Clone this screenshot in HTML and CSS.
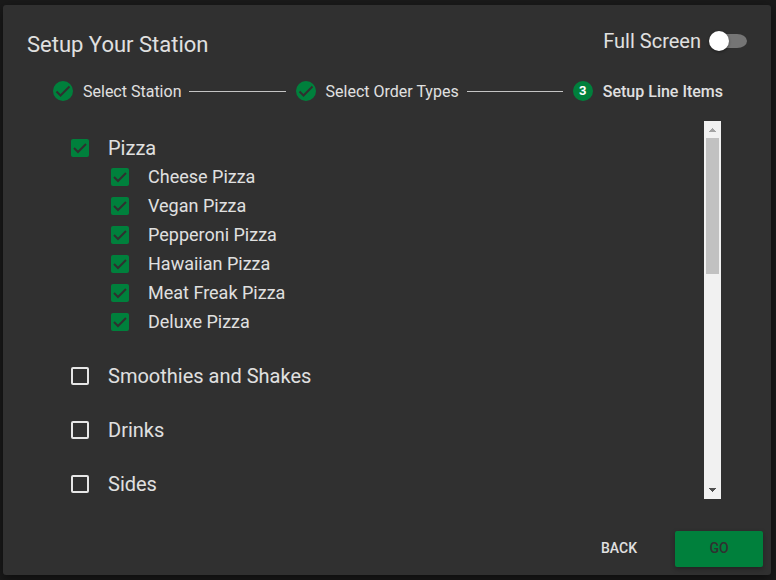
FILE: index.html
```html
<!DOCTYPE html>
<html lang="en">
<head>
<meta charset="utf-8">
<meta name="viewport" content="width=device-width, initial-scale=1">
<title>Setup Your Station</title>
<link rel="stylesheet" href="styles.css">
</head>
<body>
<main class="dialog">
  <header class="header">
    <h1 class="title">Setup Your Station</h1>
    <label class="toggle">
      <span>Full Screen</span>
      <input class="switch" type="checkbox" role="switch">
    </label>
  </header>

  <ol class="stepper">
    <li class="step">
      <span class="badge"><svg class="tick" viewBox="0 0 18 18" aria-hidden="true"><path d="M2.5 9.5 6.5 13.5 15.5 4.5"/></svg></span>
      <span class="name">Select Station</span>
    </li>
    <li class="line" role="presentation"></li>
    <li class="step">
      <span class="badge"><svg class="tick" viewBox="0 0 18 18" aria-hidden="true"><path d="M2.5 9.5 6.5 13.5 15.5 4.5"/></svg></span>
      <span class="name">Select Order Types</span>
    </li>
    <li class="line" role="presentation"></li>
    <li class="step current" aria-current="step">
      <span class="badge">3</span>
      <span class="name">Setup Line Items</span>
    </li>
  </ol>

  <div class="panel">
    <ul class="groups">
      <li class="group">
        <label class="row"><span class="check"><input class="box" type="checkbox" checked><svg class="mark" viewBox="0 0 18 18" aria-hidden="true"><path d="M3 9 7 13 15 5"/></svg></span><span>Pizza</span></label>
        <ul class="items">
          <li><label class="row item"><span class="check"><input class="box" type="checkbox" checked><svg class="mark" viewBox="0 0 18 18" aria-hidden="true"><path d="M3 9 7 13 15 5"/></svg></span><span>Cheese Pizza</span></label></li>
          <li><label class="row item"><span class="check"><input class="box" type="checkbox" checked><svg class="mark" viewBox="0 0 18 18" aria-hidden="true"><path d="M3 9 7 13 15 5"/></svg></span><span>Vegan Pizza</span></label></li>
          <li><label class="row item"><span class="check"><input class="box" type="checkbox" checked><svg class="mark" viewBox="0 0 18 18" aria-hidden="true"><path d="M3 9 7 13 15 5"/></svg></span><span>Pepperoni Pizza</span></label></li>
          <li><label class="row item"><span class="check"><input class="box" type="checkbox" checked><svg class="mark" viewBox="0 0 18 18" aria-hidden="true"><path d="M3 9 7 13 15 5"/></svg></span><span>Hawaiian Pizza</span></label></li>
          <li><label class="row item"><span class="check"><input class="box" type="checkbox" checked><svg class="mark" viewBox="0 0 18 18" aria-hidden="true"><path d="M3 9 7 13 15 5"/></svg></span><span>Meat Freak Pizza</span></label></li>
          <li><label class="row item"><span class="check"><input class="box" type="checkbox" checked><svg class="mark" viewBox="0 0 18 18" aria-hidden="true"><path d="M3 9 7 13 15 5"/></svg></span><span>Deluxe Pizza</span></label></li>
        </ul>
      </li>
      <li class="group">
        <label class="row"><span class="check"><input class="box" type="checkbox"><svg class="mark" viewBox="0 0 18 18" aria-hidden="true"><path d="M3 9 7 13 15 5"/></svg></span><span>Smoothies and Shakes</span></label>
      </li>
      <li class="group">
        <label class="row"><span class="check"><input class="box" type="checkbox"><svg class="mark" viewBox="0 0 18 18" aria-hidden="true"><path d="M3 9 7 13 15 5"/></svg></span><span>Drinks</span></label>
      </li>
      <li class="group">
        <label class="row"><span class="check"><input class="box" type="checkbox"><svg class="mark" viewBox="0 0 18 18" aria-hidden="true"><path d="M3 9 7 13 15 5"/></svg></span><span>Sides</span></label>
      </li>
    </ul>
    <div class="scrollbar" aria-hidden="true">
      <svg class="arrow up" viewBox="0 0 17 17" shape-rendering="crispEdges"><path d="M8 7h1v1h1v1h1v1h1v1H5v-1h1V9h1V8h1z"/></svg>
      <div class="track"><div class="thumb"></div></div>
      <svg class="arrow down" viewBox="0 0 17 17" shape-rendering="crispEdges"><path d="M5 6h7v1h-1v1h-1v1H9v1H8V9H7V8H6V7H5z"/></svg>
    </div>
  </div>

  <footer class="actions">
    <button class="btn" type="button">BACK</button>
    <button class="btn primary" type="button">GO</button>
  </footer>
</main>
</body>
</html>
```
FILE: styles.css
```css
* {
  box-sizing: border-box;
}

body {
  margin: 0;
  height: 100vh;
  padding: 5px 5px 5px 3px;
  display: flex;
  background: #1a1a1a;
  color: #e0e0e0;
  font-family: Roboto, "Liberation Sans", sans-serif;
}

ul,
ol {
  margin: 0;
  padding: 0;
  list-style: none;
}

.dialog {
  flex: 1;
  min-width: 0;
  display: flex;
  flex-direction: column;
  padding: 24px 8px 8px 24px;
  border-radius: 3px;
  background: #303030;
  box-shadow: 0 4px 12px rgba(0, 0, 0, 0.5);
}

.header {
  display: flex;
  justify-content: space-between;
  align-items: flex-start;
  padding-right: 16px;
}

.title {
  margin: 0;
  font-size: 22px;
  font-weight: 400;
  line-height: 32px;
}

.toggle {
  display: flex;
  align-items: center;
  gap: 8px;
  font-size: 20px;
  line-height: 24px;
}

.switch {
  appearance: none;
  display: flex;
  align-items: center;
  width: 38px;
  height: 20px;
  margin: 0;
  background: linear-gradient(#757575, #757575) content-box;
  padding: 3px 0 3px 2px;
  border-radius: 10px;
}

.switch::before {
  content: "";
  flex: none;
  width: 20px;
  height: 20px;
  margin-left: -2px;
  border-radius: 50%;
  background: #fff;
  box-shadow: 0 1px 3px rgba(0, 0, 0, 0.4);
}

.stepper {
  display: flex;
  align-items: center;
  margin-top: 17px;
  padding: 0 40px 0 26px;
  font-size: 16px;
  line-height: 24px;
}

.step {
  display: flex;
  align-items: center;
  gap: 10px;
  white-space: nowrap;
}

.name {
  padding-top: 2px;
}

.current {
  font-weight: 500;
}

.badge {
  display: flex;
  align-items: center;
  justify-content: center;
  width: 20px;
  height: 20px;
  border-radius: 50%;
  background: #00803c;
  color: #fff;
  font-size: 13px;
  font-weight: 700;
}

.tick {
  width: 18px;
  height: 18px;
  fill: none;
  stroke: #303030;
  stroke-width: 2;
}

.line {
  flex: 1;
  height: 1px;
  margin: 0 10px 0 8px;
  background: #c4c4c4;
}

.panel {
  flex: 1;
  min-height: 0;
  display: flex;
  margin: 17px 42px 0 44px;
}

.groups {
  flex: 1;
  display: flex;
  flex-direction: column;
  gap: 26px;
  padding-top: 13px;
  overflow-y: auto;
  scrollbar-width: none;
}

.row {
  display: flex;
  align-items: center;
  gap: 19px;
  font-size: 20px;
  line-height: 28px;
}

.items {
  padding-left: 40px;
}

.item {
  font-size: 18px;
  line-height: 29px;
}

.check {
  display: grid;
}

.box,
.mark {
  grid-area: 1 / 1;
  width: 18px;
  height: 18px;
}

.box {
  appearance: none;
  margin: 0;
  border: 2px solid #e6e6e6;
  border-radius: 2px;
}

.box:checked {
  border-color: #00803c;
  background: #00803c;
}

.mark {
  visibility: hidden;
  pointer-events: none;
  fill: none;
  stroke: #303030;
  stroke-width: 2;
}

.box:checked + .mark {
  visibility: visible;
}

.scrollbar {
  display: flex;
  flex-direction: column;
  width: 17px;
  background: #f1f1f1;
}

.arrow {
  width: 17px;
  height: 17px;
}

.up {
  fill: #a3a3a3;
}

.down {
  fill: #505050;
}

.track {
  flex: 1;
  padding: 0 2px;
}

.thumb {
  height: 39.5%;
  background: #c1c1c1;
}

.actions {
  display: flex;
  justify-content: flex-end;
  gap: 12px;
  margin-top: 32px;
}

.btn {
  min-width: 88px;
  height: 36px;
  padding: 0 16px 2px;
  border: 0;
  border-radius: 2px;
  background: none;
  color: #e0e0e0;
  font: 500 14px/34px Roboto, "Liberation Sans", sans-serif;
}

.primary {
  background: #00803c;
  color: #303030;
  box-shadow: 0 2px 5px rgba(0, 0, 0, 0.3);
}
```
